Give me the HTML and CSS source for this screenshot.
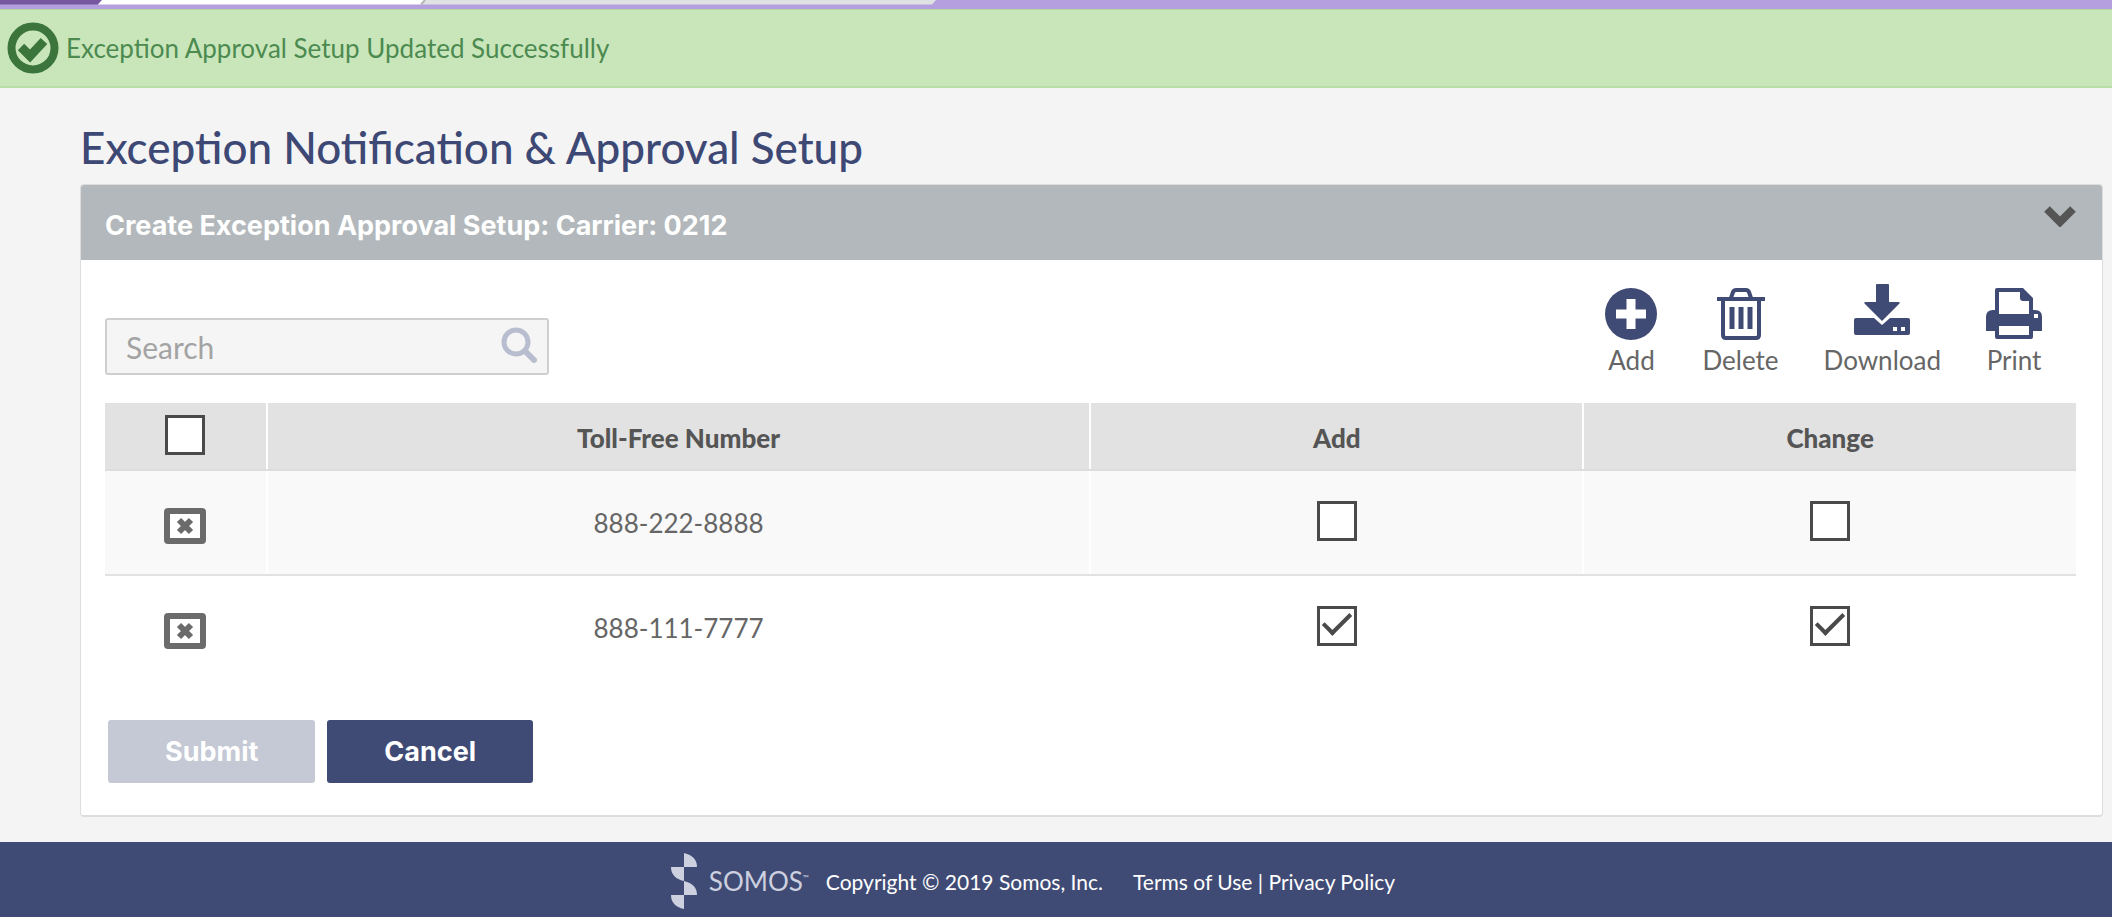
FILE: index.html
```html
<!DOCTYPE html>
<html lang="en">
<head>
  <meta charset="UTF-8" />
  <meta name="viewport" content="width=device-width, initial-scale=1" />
  <title>Exception Notification &amp; Approval Setup</title>
  <link rel="stylesheet" href="styles.css">
</head>
<body>

  <div class="tab-strip">
    <svg width="936" height="5" viewBox="0 0 936 5" aria-hidden="true">
      <path d="M0 0h102l-4 4.500H0z" fill="#7657a0" />
      <path d="M102 0h323l-4 4.500H98z" fill="#ffffff" />
      <path d="M425 0h511l-4 4.500H421z" fill="#dfe1e3" />
      <path d="M425 0l-4 4.500" stroke="#b5b5b5" stroke-width="2" />
    </svg>
  </div>

  <div class="alert" role="status">
    <svg class="alert-icon" viewBox="0 0 52 52" aria-hidden="true">
      <circle cx="26" cy="26" r="21.500" fill="none" stroke="#3b753b" stroke-width="8" />
      <path d="M14 25l9 9 14-15" fill="none" stroke="#3b753b" stroke-width="9" />
    </svg>
    <span>Exception Approval Setup Updated Successfully</span>
  </div>

  <main class="content">
    <h1>Exception Notification &amp; Approval Setup</h1>

    <section class="panel">
      <div class="panel-header">
        <h2>Create Exception Approval Setup: Carrier: 0212</h2>
        <button class="collapse" type="button" aria-label="Collapse">
          <svg width="32" height="22" viewBox="0 0 32 22" aria-hidden="true">
            <path d="M3 4l13 13L29 4" fill="none" stroke="#555555" stroke-width="8" />
          </svg>
        </button>
      </div>

      <div class="panel-body">
        <div class="toolbar">
          <div class="search">
            <input type="text" placeholder="Search" aria-label="Search">
            <svg class="search-icon" viewBox="0 0 36 36" aria-hidden="true">
              <circle cx="15" cy="15" r="12" fill="none" stroke="#b8bdd0" stroke-width="5" />
              <path d="M24 24l9 9" stroke="#b8bdd0" stroke-width="6" stroke-linecap="round" />
            </svg>
          </div>
          <div class="actions">
            <button type="button">
              <svg width="52" height="56" viewBox="0 0 52 56" aria-hidden="true">
                <circle cx="26" cy="30" r="26" />
                <path d="M26 15v30M11 30h30" stroke="#ffffff" stroke-width="9" />
              </svg>
              Add
            </button>
            <button type="button">
              <svg width="48" height="56" viewBox="0 0 48 56" aria-hidden="true">
                <path d="M0 13h48v4H0z" />
                <path d="M6 16v35q0 3 3 3h30q3 0 3-3V16M14 14l2-6q1-2 3-2h10q2 0 3 2l2 6" fill="none" stroke="#404b75" stroke-width="4" />
                <path d="M15 23v22M24 23v22M33 23v22" stroke="#404b75" stroke-width="5" />
              </svg>
              Delete
            </button>
            <button type="button">
              <svg width="56" height="56" viewBox="0 0 56 56" aria-hidden="true">
                <path d="M22 1q0-1 1-1h11q1 0 1 1v17h9q3 0 1 2L28 37 11 20q-2-2 1-2h10z" />
                <path d="M2 34h18l8 7 8-7h18q2 0 2 2v13q0 2-2 2H2q-2 0-2-2V36q0-2 2-2z" />
                <path d="M39 43h4v4h-4zM47 43h4v4h-4z" fill="#ffffff" />
              </svg>
              Download
            </button>
            <button type="button">
              <svg width="56" height="56" viewBox="0 0 56 56" aria-hidden="true">
                <path d="M9 6q0-2 2-2h26l10 10v12h2q7 0 7 7v14h-9v6q0 2-2 2H11q-2 0-2-2v-6H0V33q0-7 7-7h2z" />
                <path d="M13 8h21v6q0 3 3 3h6v13H13zM13 42h30v9H13zM48 30h4v4h-4z" fill="#ffffff" />
              </svg>
              Print
            </button>
          </div>
        </div>

        <table>
          <colgroup>
            <col class="col-select">
            <col class="col-number">
            <col class="col-flag">
            <col class="col-flag">
          </colgroup>
          <thead>
            <tr>
              <th><input type="checkbox" aria-label="Select all"></th>
              <th>Toll-Free Number</th>
              <th>Add</th>
              <th>Change</th>
            </tr>
          </thead>
          <tbody>
            <tr>
              <td>
                <button class="remove" type="button" aria-label="Remove 888-222-8888">
                  <svg width="42" height="36" viewBox="0 0 42 36" aria-hidden="true">
                    <rect x="3" y="3" width="36" height="30" rx="1" fill="#ffffff" stroke="#6b6b6b" stroke-width="6" />
                    <path d="M15 12l12 12M27 12L15 24" stroke="#6b6b6b" stroke-width="6" />
                  </svg>
                </button>
              </td>
              <td>888-222-8888</td>
              <td><input type="checkbox" aria-label="Add 888-222-8888"></td>
              <td><input type="checkbox" aria-label="Change 888-222-8888"></td>
            </tr>
            <tr>
              <td>
                <button class="remove" type="button" aria-label="Remove 888-111-7777">
                  <svg width="42" height="36" viewBox="0 0 42 36" aria-hidden="true">
                    <rect x="3" y="3" width="36" height="30" rx="1" fill="#ffffff" stroke="#6b6b6b" stroke-width="6" />
                    <path d="M15 12l12 12M27 12L15 24" stroke="#6b6b6b" stroke-width="6" />
                  </svg>
                </button>
              </td>
              <td>888-111-7777</td>
              <td><input type="checkbox" aria-label="Add 888-111-7777" checked></td>
              <td><input type="checkbox" aria-label="Change 888-111-7777" checked></td>
            </tr>
          </tbody>
        </table>

        <div class="button-row">
          <button class="submit" type="submit" disabled>Submit</button>
          <button class="cancel" type="button">Cancel</button>
        </div>
      </div>
    </section>
  </main>

  <footer>
    <div class="logo">
      <svg width="26" height="56" viewBox="0 0 26 56" aria-hidden="true">
        <path d="M13 0q13 3 13 14H13zM0 14h13v14Q0 25 0 14zM13 28q13 3 13 14H13zM0 42h13v14Q0 53 0 42z" fill="#cdd0df" />
      </svg>
      <span class="logo-name">SOMOS<sup>™</sup></span>
    </div>
    <span>Copyright © 2019 Somos, Inc.</span>
    <nav><a href="#">Terms of Use</a> | <a href="#">Privacy Policy</a></nav>
  </footer>

</body>
</html>
```
FILE: styles.css
```css
* {
  box-sizing: border-box;
}

html, body {
  margin: 0;
  padding: 0;
}

body {
  min-height: 100vh;
  display: flex;
  flex-direction: column;
  background: #f4f4f4;
  color: #666666;
  font-family: Lato, "Open Sans", sans-serif;
  font-size: 26px;
}

button, input {
  font-family: inherit;
}

button {
  padding: 0;
  border: 0;
  background: none;
  color: inherit;
  cursor: pointer;
}

svg {
  display: block;
}

.tab-strip {
  height: 9px;
  overflow: hidden;
  background: #b59fdf;
}

.alert {
  display: flex;
  align-items: center;
  gap: 7px;
  height: 79px;
  padding: 0 7px;
  background: #c9e6bb;
  border-top: 1px solid #b3dba0;
  border-bottom: 2px solid #b9dfa9;
  color: #4c8a50;
}

.alert-icon {
  width: 52px;
  height: 52px;
}

.content {
  flex: 1;
  padding: 31px 9px 24px 80px;
}

h1 {
  margin: 0;
  color: #3d4874;
  font-size: 44px;
  font-weight: 500;
  line-height: 56px;
}

.panel {
  margin-top: 9px;
  background: #ffffff;
  border: 1px solid #dddddd;
  border-bottom: 2px solid #dddddd;
  border-radius: 4px;
}

.panel-header {
  display: flex;
  align-items: flex-start;
  justify-content: space-between;
  height: 75px;
  padding: 20px 26px 0 24px;
  background: #b2b8bb;
  border-radius: 3px 3px 0 0;
}

h2 {
  margin: 0;
  color: #ffffff;
  font-family: Inter, Lato, sans-serif;
  font-size: 27px;
  font-weight: bold;
  line-height: 42px;
}

.panel-body {
  padding: 24px 26px 32px 24px;
}

.toolbar {
  display: flex;
  align-items: flex-end;
  justify-content: space-between;
  margin-bottom: 28px;
}

.search {
  position: relative;
  width: 444px;
}

.search input {
  display: block;
  width: 100%;
  height: 57px;
  padding: 0 60px 0 19px;
  border: 2px solid #cfcfcf;
  border-radius: 3px;
  background: #f5f5f5;
  color: #666666;
  font-size: 30px;
}

.search input::placeholder {
  color: #a3a3a3;
  opacity: 1;
}

.search-icon {
  position: absolute;
  top: 9px;
  right: 12px;
  width: 36px;
  height: 36px;
}

.actions {
  display: flex;
  gap: 45px;
  padding-right: 34px;
}

.actions button {
  display: flex;
  flex-direction: column;
  align-items: center;
  gap: 5px;
  font-size: 26px;
  line-height: 30px;
}

.actions svg {
  fill: #404b75;
}

table {
  width: 100%;
  table-layout: fixed;
  border-collapse: collapse;
}

.col-select {
  width: 8.2%;
}

.col-number {
  width: 41.8%;
}

th, td {
  padding: 0;
  border-right: 2px solid #ffffff;
  text-align: center;
  vertical-align: middle;
}

th:last-child, td:last-child {
  border-right: 0;
}

th {
  height: 67px;
  padding-top: 3px;
  background: #e2e2e2;
  border-bottom: 2px solid #dcdcdc;
  color: #555555;
  font-weight: 900;
}

td {
  height: 105px;
}

tbody tr:first-child td {
  background: #f9f9f9;
  border-bottom: 2px solid #e2e2e2;
}

input[type="checkbox"] {
  appearance: none;
  position: relative;
  width: 40px;
  height: 40px;
  margin: 0 0 4px;
  border: 3px solid #4a4a4a;
  background: #ffffff;
  vertical-align: middle;
}

input[type="checkbox"]:checked::after {
  content: "";
  box-sizing: border-box;
  position: absolute;
  top: 4px;
  left: 3px;
  width: 28px;
  height: 15px;
  border-left: 4px solid #4a4a4a;
  border-bottom: 4px solid #4a4a4a;
  transform: rotate(-45deg);
}

th input[type="checkbox"] {
  margin-bottom: 6px;
}

.remove {
  margin-top: 6px;
  vertical-align: middle;
}

.button-row {
  display: flex;
  gap: 12px;
  margin-top: 40px;
  padding-left: 3px;
}

.button-row button {
  height: 63px;
  padding: 0 57px;
  border-radius: 3px;
  color: #ffffff;
  font-family: Inter, Lato, sans-serif;
  font-size: 27px;
  font-weight: bold;
}

.submit {
  background: #c5c8d5;
}

.cancel {
  background: #404b75;
}

footer {
  display: flex;
  align-items: center;
  justify-content: center;
  gap: 17px;
  height: 75px;
  padding: 3px 46px 0 0;
  background: #404b75;
  color: #ffffff;
  font-size: 21px;
}

footer nav {
  margin-left: 13px;
}

footer a {
  color: #ffffff;
  text-decoration: none;
}

.logo {
  display: flex;
  align-items: center;
  gap: 12px;
  color: #cdd0df;
}

.logo-name {
  font-size: 26px;
}

.logo-name sup {
  font-size: 8px;
}
```
